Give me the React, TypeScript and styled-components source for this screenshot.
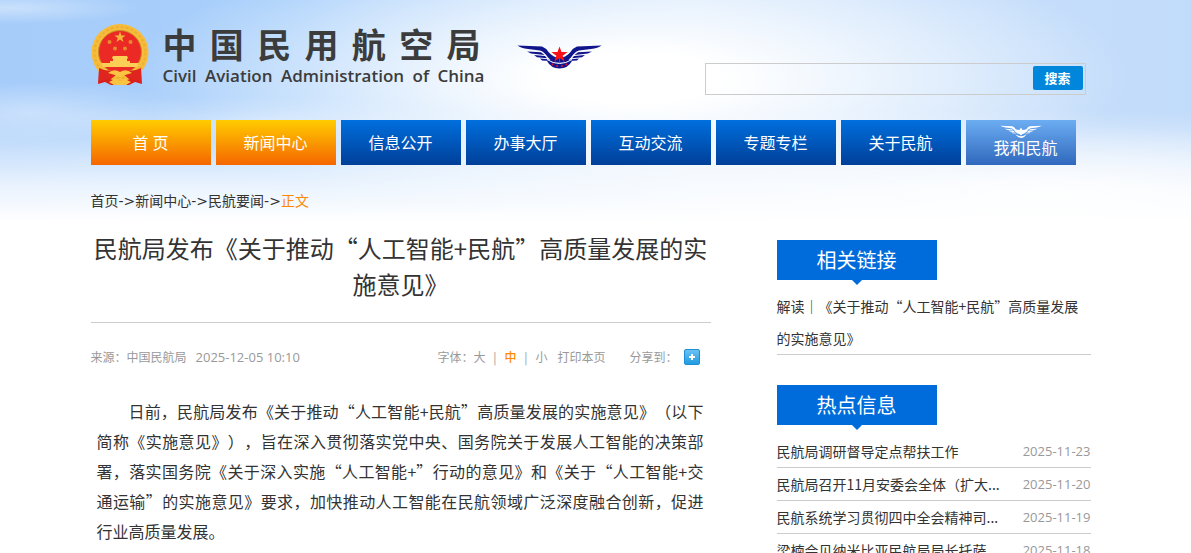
import React from 'react';
import styled, { createGlobalStyle } from 'styled-components';

const Global = createGlobalStyle`
  * { box-sizing: border-box; margin: 0; padding: 0; }
  body {
    background: #fff;
    color: #333;
    font: 14px/20px "Open Sans", "Noto Sans CJK SC", sans-serif;
    text-spacing-trim: space-all;
  }
  a { color: inherit; text-decoration: none; }
  ul { list-style: none; }
`;

const Page = styled.div`
  background:
    linear-gradient(180deg, rgba(255,255,255,0) 0, rgba(255,255,255,0) 110px, rgba(255,255,255,0.75) 185px, #fff 222px),
    radial-gradient(ellipse 420px 70px at 88% 195px, rgba(255,255,255,0.9), rgba(255,255,255,0) 100%),
    radial-gradient(ellipse 170px 30px at 30px 112px, rgba(255,255,255,0.4), rgba(255,255,255,0) 100%),
    radial-gradient(ellipse 220px 24px at 260px 120px, rgba(255,255,255,0.3), rgba(255,255,255,0) 100%),
    radial-gradient(ellipse 130px 16px at 10px 8px, rgba(255,255,255,0.4), rgba(255,255,255,0) 100%),
    radial-gradient(ellipse 42% 140px at 53% 78px, #fff 18%, rgba(255,255,255,0) 100%),
    linear-gradient(90deg, #a6ccfa 0%, #a9d0fb 26%, #cfe4fc 58%, #c1dbfa 100%);
  background-repeat: no-repeat;
  background-size: 100% 222px;
`;

const Container = styled.div`
  width: 100%;
  max-width: 1010px;
  margin: 0 auto;
`;

const Header = styled.header`
  display: flex;
  align-items: flex-start;
  height: 120px;
`;

const Brand = styled.a`
  display: flex;
  align-items: flex-start;
  gap: 14px;
  padding-top: 24px;
`;

const BrandText = styled.div`
  width: 322px;
  color: #3c3c3c;
`;

const BrandName = styled.h1`
  display: flex;
  justify-content: space-between;
  padding-right: 4px;
  font-size: 34px;
  line-height: 42px;
  font-weight: 700;
`;

const BrandLatin = styled.p`
  display: flex;
  justify-content: space-between;
  font-size: 17px;
  line-height: 20px;
  font-weight: 600;
`;

const Wings = styled.svg`
  margin: 44px 0 0 32px;
`;

const Search = styled.form`
  display: flex;
  align-items: center;
  width: 381px;
  height: 32px;
  margin: 63px 15px 0 auto;
  padding: 0 2px;
  border: 1px solid #ccc;
`;

const SearchInput = styled.input`
  flex: 1;
  min-width: 0;
  height: 28px;
  border: 0;
  outline: 0;
  background: transparent;
  font: inherit;
`;

const SearchButton = styled.button`
  width: 50px;
  height: 24px;
  margin-bottom: 2px;
  border: 0;
  border-radius: 2px;
  background: #0087dc;
  color: #fff;
  font: 700 13px/24px "Noto Sans CJK SC", sans-serif;
`;

const Nav = styled.nav`
  display: flex;
  gap: 5px;
`;

const NavItem = styled.a<{ $active?: boolean }>`
  width: 120px;
  height: 45px;
  background: ${(p) => (p.$active ? 'linear-gradient(#ffcc00, #f56600)' : 'linear-gradient(#006fde, #003f98)')};
  color: #fff;
  font-size: 16px;
  line-height: 46px;
  text-align: center;
`;

const NavMine = styled.a`
  display: flex;
  flex-direction: column;
  width: 110px;
  height: 45px;
  padding: 5px 0 0 10px;
  background: linear-gradient(#6cadf2, #3068bd);
  color: #fff;
  font-size: 16px;
  line-height: 20px;
  text-align: center;

  svg { align-self: center; margin-right: 10px; flex: none; }
`;

const Crumbs = styled.nav`
  display: flex;
  padding-top: 26px;
  line-height: 20px;
`;

const Arrow = styled.span`
  font-family: "DejaVu Sans", sans-serif;
`;

const Current = styled.span`
  color: #f80;
`;

const Columns = styled.div`
  display: flex;
  justify-content: space-between;
  padding-right: 10px;
`;

const Article = styled.article`
  width: 620px;
  padding-top: 19px;
  font-family: "Noto Sans CJK SC", sans-serif;
`;

const Title = styled.h2`
  padding-bottom: 20px;
  border-bottom: 1px solid #ccc;
  font-size: 24px;
  line-height: 36px;
  font-weight: 400;
  text-align: center;
`;

const Meta = styled.div`
  display: flex;
  align-items: center;
  height: 20px;
  margin-top: 24px;
  padding-right: 11px;
  color: #999;
  font-size: 12px;
  line-height: 20px;
`;

const Stamp = styled.time`
  margin-left: 9px;
  font-family: "Open Sans", sans-serif;
  font-size: 13px;
`;

const FontSizes = styled.div`
  display: flex;
  margin-left: auto;
`;

const MetaButton = styled.button<{ $on?: boolean }>`
  border: 0;
  background: none;
  color: ${(p) => (p.$on ? '#f80' : '#999')};
  font: inherit;
  font-weight: ${(p) => (p.$on ? 500 : 400)};
`;

const Bar = styled.span`
  width: 19px;
  text-align: center;
`;

const Print = styled(MetaButton)`
  margin: 0 24px 0 10px;
`;

const Share = styled(MetaButton)`
  display: flex;
  margin-left: 18px;
`;

const ShareLabel = styled.span`
  width: 36px;
  white-space: nowrap;
`;

const Body = styled.p`
  padding: 29px 7px 20px 6px;
  font-size: 16px;
  line-height: 30px;
  text-indent: 2em;
  text-align: justify;
`;

const Aside = styled.aside`
  width: 314px;
  padding-top: 29px;
`;

const Panel = styled.section`
  margin-bottom: 30px;
`;

const PanelTitle = styled.h3`
  position: relative;
  width: 160px;
  height: 40px;
  margin-bottom: 10px;
  background: #006cdb;
  color: #fff;
  font-size: 20px;
  line-height: 42px;
  font-weight: 400;
  text-align: center;

  &::after {
    content: '';
    position: absolute;
    top: 100%;
    left: 50%;
    margin-left: -5px;
    border: 5px solid transparent;
    border-top-color: #006cdb;
    border-bottom: 0;
  }
`;

const Row = styled.li`
  display: flex;
  justify-content: space-between;
  border-bottom: 1px solid #ccc;
  font-family: "Noto Sans CJK SC", sans-serif;
  line-height: 32px;
`;

const RowDate = styled.time`
  color: #999;
  font-family: "Open Sans", sans-serif;
  font-size: 13px;
`;

const Feathers = () => (
  <>
    <path d="M0.500 1.500 L25 2.500 Q29 4 31.500 8 Q36 13.500 42.500 14 V18.500 Q35 18 31 13.500 Q27 7.500 23 6.500 L11 5 Q4 4 0.500 1.500Z" />
    <path d="M10 7.500 L24 8.300 L27.500 11 L14 9.600Z" />
    <path d="M17 11 L28 12 L30 14.300 L20 13.200Z" />
    <path d="M23 14.500 L31 15.300 L33 17 L25 16.500Z" />
  </>
);

const WingPair = () => (
  <>
    <g><Feathers /></g>
    <g transform="translate(85 0) scale(-1 1)"><Feathers /></g>
  </>
);

const Emblem = () => (
  <svg width="58" height="62" viewBox="0 0 58 62" aria-hidden="true">
    <path d="M8 43 L7 60 L14 58 L20 61 H38 L44 58 L51 60 L50 43Z" fill="#d8201c" />
    <circle cx="29" cy="28.500" r="28.500" fill="#f6bd3c" />
    <circle cx="29" cy="28.500" r="25.500" fill="none" stroke="#f0ae30" strokeWidth="2" strokeDasharray="3 2" />
    <circle cx="29" cy="28" r="21.500" fill="#ec2a25" stroke="#c98a24" />
    <path d="M29 7.500l1.400 4h4.200l-3.400 2.500 1.300 4-3.500-2.400-3.500 2.400 1.300-4-3.400-2.500h4.200z" fill="#f5b63c" />
    <g fill="#e98a30">
      <circle cx="18.500" cy="18" r="2" />
      <circle cx="39.500" cy="18" r="2" />
      <circle cx="24" cy="24.500" r="2" />
      <circle cx="34" cy="24.500" r="2" />
    </g>
    <path d="M22 32h14l1 2-1 1v2h3v2h9l-2 4H12l-2-4h9v-2h3v-2l-1-1z" fill="#fbcf55" />
    <path d="M8 44 Q14 47 20 47 L26 50 L20 55 L8 57Z M50 44 Q44 47 38 47 L32 50 L38 55 L50 57Z" fill="#e0251f" />
    <path d="M17 49 Q23 44 29 48 Q35 44 41 49 L34 51 L29 53 L24 51Z M18 58l6-3 5 2 5-2 6 3-5 3H23z" fill="#f8c441" />
  </svg>
);

const navItems = ['首 页', '新闻中心', '信息公开', '办事大厅', '互动交流', '专题专栏', '关于民航'];

const hotNews = [
  ['民航局调研督导定点帮扶工作', '2025-11-23'],
  ['民航局召开11月安委会全体（扩大...', '2025-11-20'],
  ['民航系统学习贯彻四中全会精神司...', '2025-11-19'],
  ['梁楠会见纳米比亚民航局局长托萨', '2025-11-18'],
];

export default function App() {
  return (
    <Page>
      <Global />
      <Container>
        <Header>
          <Brand href="#">
            <Emblem />
            <BrandText>
              <BrandName>{[...'中国民用航空局'].map((c) => <span key={c}>{c}</span>)}</BrandName>
              <BrandLatin>
                {'Civil Aviation Administration of China'.split(' ').map((w) => <span key={w}>{w} </span>)}
              </BrandLatin>
            </BrandText>
          </Brand>
          <Wings width="85" height="26" viewBox="0 0 85 26" aria-hidden="true">
            <g fill="#10158c"><WingPair /></g>
            <path d="M30 17 L34 15 Q42.500 22 51 15 L55 17 Q51 24.500 42.500 24.500 Q34 24.500 30 17Z" fill="#10158c" />
            <path d="M30 15.500 Q36 19.500 42.500 19.500 Q49 19.500 55 15.500" fill="none" stroke="#fff" />
            <path d="M42.500 2.500l2 5.600h6.200l-5 3.700 1.900 5.800-5.100-3.500-5.100 3.500 1.900-5.800-5-3.700h6.200z" fill="#f81018" />
            <g fill="#e01430">
              <circle cx="35.500" cy="20.500" r="1" />
              <circle cx="40" cy="22" r="1" />
              <circle cx="45" cy="22" r="1" />
              <circle cx="49.500" cy="20.500" r="1" />
            </g>
          </Wings>
          <Search onSubmit={(e) => e.preventDefault()}>
            <SearchInput type="text" aria-label="搜索" />
            <SearchButton type="submit">搜索</SearchButton>
          </Search>
        </Header>
        <Nav>
          {navItems.map((t, i) => <NavItem key={t} href="#" $active={i < 2}>{t}</NavItem>)}
          <NavMine href="#">
            <svg width="42" height="13" viewBox="0 0 85 26" fill="#fff" aria-hidden="true">
              <WingPair />
              <path d="M42.500 5l3 5 8-1-11 12-11-12 8 1z M31 18 Q42.500 27 54 18 Q49 26 42.500 26 Q36 26 31 18Z" />
            </svg>
            我和民航
          </NavMine>
        </Nav>
        <Crumbs>
          <a href="#">首页</a><Arrow>-&gt;</Arrow><a href="#">新闻中心</a><Arrow>-&gt;</Arrow>
          <a href="#">民航要闻</a><Arrow>-&gt;</Arrow><Current>正文</Current>
        </Crumbs>
        <Columns>
          <Article>
            <Title>民航局发布《关于推动“人工智能+民航”高质量发展的实施意见》</Title>
            <Meta>
              <span>来源：中国民航局</span>
              <Stamp>2025-12-05 10:10</Stamp>
              <FontSizes>
                <span>字体：</span>
                <MetaButton>大</MetaButton>
                <Bar>|</Bar>
                <MetaButton $on>中</MetaButton>
                <Bar>|</Bar>
                <MetaButton>小</MetaButton>
              </FontSizes>
              <Print>打印本页</Print>
              <ShareLabel>分享到：</ShareLabel>
              <Share aria-label="分享">
                <svg width="16" height="16" viewBox="0 0 16 16">
                  <defs>
                    <linearGradient id="share" x2="0" y2="1">
                      <stop stopColor="#6cc4f4" />
                      <stop offset="1" stopColor="#1f9ae0" />
                    </linearGradient>
                  </defs>
                  <rect x=".5" y=".5" width="15" height="15" rx="1.500" fill="url(#share)" stroke="#1c8fd6" />
                  <path d="M7 5h2v2h2v2H9v2H7V9H5V7h2z" fill="#fff" />
                </svg>
              </Share>
            </Meta>
            <Body>
              日前，民航局发布《关于推动“人工智能+民航”高质量发展的实施意见》（以下简称《实施意见》），旨在深入贯彻落实党中央、国务院关于发展人工智能的决策部署，落实国务院《关于深入实施“人工智能+”行动的意见》和《关于“人工智能+交通运输”的实施意见》要求，加快推动人工智能在民航领域广泛深度融合创新，促进行业高质量发展。
            </Body>
          </Article>
          <Aside>
            <Panel>
              <PanelTitle>相关链接</PanelTitle>
              <ul>
                <Row><a href="#">解读｜《关于推动“人工智能+民航”高质量发展的实施意见》</a></Row>
              </ul>
            </Panel>
            <Panel>
              <PanelTitle>热点信息</PanelTitle>
              <ul>
                {hotNews.map(([t, d]) => (
                  <Row key={t}><a href="#">{t}</a><RowDate>{d}</RowDate></Row>
                ))}
              </ul>
            </Panel>
          </Aside>
        </Columns>
      </Container>
    </Page>
  );
}
